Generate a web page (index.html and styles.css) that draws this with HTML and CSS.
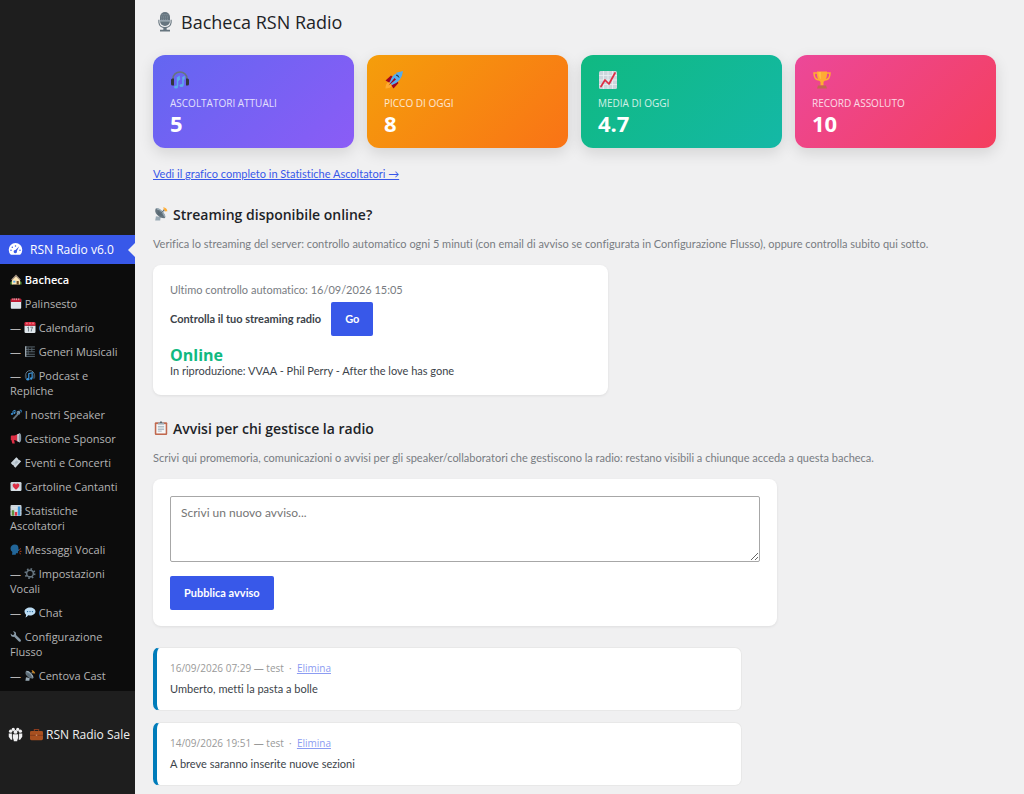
FILE: index.html
```html
<!DOCTYPE html>
<html lang="it">
<head>
    <meta charset="UTF-8">
    <meta name="viewport" content="width=device-width, initial-scale=1.0">
    <title>Bacheca RSN Radio</title>
    <link rel="stylesheet" href="styles.css">
</head>
<body>
    <!-- Icon set -->
    <svg class="icon-defs" aria-hidden="true">
        <symbol id="i-dash" viewBox="0 0 20 20"><path fill="#fff" fill-rule="evenodd" d="M3.8 17A9 9 0 1 1 16.2 17zM10 4.2a1 1 0 1 0 0 2 1 1 0 0 0 0-2zM5.700 6a1 1 0 1 0 0 2 1 1 0 0 0 0-2zM4 10a1 1 0 1 0 0 2 1 1 0 0 0 0-2zM16 10a1 1 0 1 0 0 2 1 1 0 0 0 0-2zM15 5.600l-5 5a2.200 2.200 0 1 0 1.800 1.500z"/></symbol>
        <symbol id="i-groups" viewBox="0 0 20 20"><g fill="#f0f0f1"><circle cx="3.500" cy="5.500" r="2.200"/><circle cx="16.500" cy="5.500" r="2.200"/><circle cx="7" cy="3.200" r="2.200"/><circle cx="13" cy="3.200" r="2.200"/><circle cx="10" cy="6.500" r="2.600"/><path d="M1 8.500h4.200l.6 8.500H3.800L1 13zM14.800 8.500H19V13l-2.800 4h-2z"/><path d="M6.300 9.700h7.400v5L12.200 19H7.800l-1.500-4.300z"/></g><path fill="none" stroke="#1e1e1e" stroke-width=".6" d="M5.800 8.500v5l1.500 5M14.200 8.500v5l-1.500 5"/></symbol>
        <symbol id="i-case" viewBox="0 0 36 36"><path fill="none" stroke="#8a3b1e" stroke-width="3" d="M12 10V4h12v6"/><rect y="8" width="36" height="26" rx="4" fill="#a85020"/><path fill="#7b3518" d="M0 19h36v2H0z"/><path fill="#c98a66" d="M16 18h4v4h-4z"/></symbol>
        <symbol id="i-house" viewBox="0 0 36 36"><path fill="#5c913b" d="M0 27q4-6 8 0v7H0zM28 27q5-7 8 0v7h-8z"/><path fill="#ffe8b6" d="M5 17 18 5l13 12v17H5z"/><path fill="#a08f7f" d="m2 19 16-17 16 17-3 2L18 8 5 21z"/><path fill="#66471f" d="M20 23h7v11h-7z"/><path fill="#55acee" d="M9 22h7v6H9z"/></symbol>
        <symbol id="i-pad" viewBox="0 0 36 36"><rect x="1" y="3" width="34" height="32" rx="3" fill="#e1e8ed"/><path fill="#be1931" d="M1 5q0-3 3-3h28q3 0 3 3v8H1z"/><path stroke="#fff" stroke-width="2" d="M8 1v6M14 1v6M20 1v6M27 1v6"/><path stroke="#cfd7dc" stroke-width="1" d="M5 20h26M5 25h26M5 30h26"/></symbol>
        <symbol id="i-cal" viewBox="0 0 36 36"><path fill="#e0e7ec" d="M0 12h36v20q0 4-4 4H4q-4 0-4-4z"/><path fill="#dd2e44" d="M0 12V4q0-4 4-4h28q4 0 4 4v8z"/><path stroke="#f9b4bb" stroke-width="3" d="M8 2v5M18 2v5M28 2v5"/><path fill="none" stroke="#66757f" stroke-width="3" d="m9 19 4-3v15M19 17h8q-5 7-5 14"/></symbol>
        <symbol id="i-score" viewBox="0 0 36 36"><path stroke="#6f7f8b" stroke-width="2.500" d="M4 3h30M4 11h30M4 19h30M4 27h30M4 34h30"/><path stroke="#a9b6bf" stroke-width="4" d="M4 1v34"/><path stroke="#55626b" stroke-width="3" d="M12 5v24M24 5v14"/></symbol>
        <symbol id="i-phones" viewBox="0 0 36 36"><path fill="none" stroke="#66757f" stroke-width="3" d="M4 20V15a14 13 0 0 1 28 0v5"/><path fill="#31373d" d="M0 18q0-3 3-3h3v14H3q-3 0-3-3zM30 15h3q3 0 3 3v8q0 3-3 3h-3z"/><path fill="none" stroke="#5dadec" stroke-width="3" d="M13 31V14l3-2v5l2-2M24 28V13l2-1v5"/><ellipse cx="10" cy="32" rx="4" ry="3" fill="#5dadec"/><ellipse cx="21" cy="29" rx="4" ry="3" fill="#5dadec"/></symbol>
        <symbol id="i-podcast" viewBox="0 0 36 36"><path fill="none" stroke="#6b8394" stroke-width="3" d="M4 26V16a14 14 0 0 1 28 0v10"/><path fill="#3b4c59" d="M1 17h6v13q-6-1-6-6zM29 17h6v7q0 5-6 6z"/><path fill="none" stroke="#3b94d9" stroke-width="4" d="M14 29V12l11-3v17"/><ellipse cx="11" cy="30" rx="5" ry="4" fill="#3b94d9"/><ellipse cx="22" cy="28" rx="4" ry="4" fill="#3b94d9"/></symbol>
        <symbol id="i-speaker" viewBox="0 0 36 36"><path stroke="#66757f" stroke-width="6" d="m9 33 16-17"/><circle cx="26" cy="12" r="6" fill="#8899a6"/><path stroke="#226699" stroke-width="2" d="m20 8 11 10"/><path fill="none" stroke="#3b94d9" stroke-width="3" d="M8 15V7l7-3v8"/><ellipse cx="5" cy="16" rx="4" ry="3" fill="#3b94d9"/><ellipse cx="13" cy="13" rx="3" ry="3" fill="#3b94d9"/><path stroke="#3b94d9" stroke-width="3" d="M30 4h5v7"/></symbol>
        <symbol id="i-horn" viewBox="0 0 36 36"><path fill="#dd2e44" d="M1 11q0-3 3-3h11v15h-3l2 11H6L3 23H1z"/><path fill="#dd2e44" d="m14 8 11-5v25l-11-5z"/><path fill="#ccd6dd" d="m22 4 9-3v30l-9-4z"/><ellipse cx="31" cy="15.500" rx="4" ry="14" fill="#8899a6"/></symbol>
        <symbol id="i-ticket" viewBox="0 0 36 36"><path fill="#ccd6dd" d="M1 20 19 1l5 4q0 4 4 4l7 5-19 21-5-5q0-4-4-4z"/><path fill="#aab8c2" d="m13 18 7-7 6 5-8 8z"/><path stroke="#8899a6" stroke-width="1" d="m7 17 12 11"/></symbol>
        <symbol id="i-love" viewBox="0 0 36 36"><rect y="3" width="36" height="30" rx="4" fill="#ccd6dd"/><path fill="#e1e8ed" d="m1 31 12-12h10l12 12z"/><path fill="#dd2e44" d="M18 29Q7 20 7 15a5.500 5.500 0 0 1 11-2 5.500 5.500 0 0 1 11 2q0 5-11 14z"/></symbol>
        <symbol id="i-bars" viewBox="0 0 36 36"><rect width="36" height="36" rx="3" fill="#ccd6dd"/><path stroke="#fff" d="M0 9h36M0 18h36M0 27h36"/><path fill="#5c913b" d="M4 17h8v18H4z"/><path fill="#dd2e44" d="M14 23h8v12h-8z"/><path fill="#3b94d9" d="M24 5h8v30h-8z"/></symbol>
        <symbol id="i-talk" viewBox="0 0 36 36"><path fill="#226699" d="M14 2q13 0 12 14l3 6-4 1-1 7h-6l-1 5H5l1-9Q0 22 0 15 1 3 14 2z"/><path fill="none" stroke="#c1451e" stroke-width="3" d="m29 18 5-3M30 24h6M29 29l5 4"/></symbol>
        <symbol id="i-gear" viewBox="0 0 36 36"><circle cx="18" cy="18" r="11" fill="none" stroke="#66757f" stroke-width="5"/><circle cx="18" cy="18" r="15" fill="none" stroke="#66757f" stroke-width="6" stroke-dasharray="5 6.780"/></symbol>
        <symbol id="i-chat" viewBox="0 0 36 36"><path fill="#bdddf4" d="M18 2c10 0 18 6 18 13s-8 13-18 13l-6-.8Q8 33 3 34q3-5 2-9-5-4-5-10C0 8 8 2 18 2z"/><g fill="#226699"><circle cx="10" cy="15" r="2.300"/><circle cx="18" cy="15" r="2.300"/><circle cx="26" cy="15" r="2.300"/></g></symbol>
        <symbol id="i-wrench" viewBox="0 0 36 36"><path fill="#8899a6" d="m8 1 5 6-2 5-5 1-5-5q-2 10 8 12l3-1 14 14q3 4 7 1 3-3-1-7L18 13q2-12-10-12z"/></symbol>
        <symbol id="i-dish" viewBox="0 0 36 36"><path fill="#99aab5" d="m5 24 12 2-1 9H3z"/><path fill="#66757f" d="M5 3q-5 8 3 17t19 9q5-4-3-15T5 3z"/><path fill="#99aab5" d="M5 3q7-2 16 7t8 17z"/><path fill="#55656f" d="M10 8q8-1 15 15L9 20z" opacity=".7"/><path stroke="#55656f" stroke-width="2" d="m16 17 9-8"/><circle cx="25" cy="9" r="2.500" fill="#66757f"/><path fill="none" stroke="#ffac33" stroke-width="3" d="M24 2q8 1 9 9M25 6q4 0 5 5"/></symbol>
        <symbol id="i-mic" viewBox="0 0 36 36"><path fill="none" stroke="#66757f" stroke-width="2" d="M7 14v5q1 9 11 9t11-9v-5"/><path fill="#66757f" d="M15 27h6v5h6v3H9v-3h6z"/><rect x="9" y="0" width="18" height="25" rx="9" fill="#66757f"/><path stroke="#8f9ea8" stroke-width="1.500" stroke-dasharray="2 1.500" d="M12 5h12M11 9h14M11 13h14"/><path stroke="#b3bfc7" stroke-width="2" d="M9 16h18"/></symbol>
        <symbol id="i-rocket" viewBox="0 0 36 36"><path fill="#ffac33" d="M1 35q0-10 6-13l7 7q-3 6-13 6z"/><path fill="#a0041e" d="M1 19 12 9l7 5L8 23zM17 35l10-11-5-6-9 11z"/><path fill="#55acee" d="M9 23Q15 3 36 0q-2 21-22 28z"/><path fill="#a0041e" d="M7 29 19 14l3 3z"/><path fill="#292f33" d="M22 8q5-1 6 5-2-3-6-5z" stroke="#292f33"/></symbol>
        <symbol id="i-chart" viewBox="0 0 36 36"><rect width="36" height="36" rx="3" fill="#ccd6dd"/><path stroke="#eef2f4" stroke-width="1.500" d="M0 9h36M0 18h36M0 27h36M9 0v36M18 0v36M27 0v36"/><path fill="none" stroke="#dd2e44" stroke-width="3.500" stroke-linecap="round" stroke-linejoin="round" d="m4 31 8-13 8 8L32 4"/></symbol>
        <symbol id="i-cup" viewBox="0 0 36 36"><path fill="none" stroke="#ffac33" stroke-width="3" d="M9 4H2q0 14 11 14M27 4h7q0 14-11 14"/><path fill="#ffac33" d="M8 1h20q1 16-7 21v7h-6v-7Q7 17 8 1z"/><path fill="#ffcc4d" d="M11 2h5v15q-5-4-5-15z" opacity=".6"/><path fill="#c1694f" d="M10 29h16l2 6H8z"/></symbol>
        <symbol id="i-clip" viewBox="0 0 36 36"><rect x="2" y="3" width="32" height="33" rx="3" fill="#c1694f"/><path fill="#f5f8fa" d="M6 8h24v24H6z"/><path fill="#99aab5" d="M10 4h5q3-7 6 0h5v5H10z"/><circle cx="18" cy="3" r="2" fill="#31373d"/><path stroke="#99aab5" stroke-width="2" d="M10 14h16M10 18h16M10 22h16M10 26h10"/></symbol>
    </svg>

    <div class="layout">
        <nav class="sidebar">
            <a href="#" class="menu-top current"><svg class="menu-icon"><use href="#i-dash"/></svg>RSN Radio v6.0</a>
            <ul class="submenu">
                <li><a href="#" class="active"><svg class="emoji"><use href="#i-house"/></svg> Bacheca</a></li>
                <li><a href="#"><svg class="emoji"><use href="#i-pad"/></svg> Palinsesto</a></li>
                <li><a href="#">— <svg class="emoji"><use href="#i-cal"/></svg> Calendario</a></li>
                <li><a href="#">— <svg class="emoji"><use href="#i-score"/></svg> Generi Musicali</a></li>
                <li><a href="#">— <svg class="emoji"><use href="#i-podcast"/></svg> Podcast e Repliche</a></li>
                <li><a href="#"><svg class="emoji"><use href="#i-speaker"/></svg> I nostri Speaker</a></li>
                <li><a href="#"><svg class="emoji"><use href="#i-horn"/></svg> Gestione Sponsor</a></li>
                <li><a href="#"><svg class="emoji"><use href="#i-ticket"/></svg> Eventi e Concerti</a></li>
                <li><a href="#"><svg class="emoji"><use href="#i-love"/></svg> Cartoline Cantanti</a></li>
                <li><a href="#"><svg class="emoji"><use href="#i-bars"/></svg> Statistiche Ascoltatori</a></li>
                <li><a href="#"><svg class="emoji"><use href="#i-talk"/></svg> Messaggi Vocali</a></li>
                <li><a href="#">— <svg class="emoji"><use href="#i-gear"/></svg> Impostazioni Vocali</a></li>
                <li><a href="#">— <svg class="emoji"><use href="#i-chat"/></svg> Chat</a></li>
                <li><a href="#"><svg class="emoji"><use href="#i-wrench"/></svg> Configurazione Flusso</a></li>
                <li><a href="#">— <svg class="emoji"><use href="#i-dish"/></svg> Centova Cast</a></li>
            </ul>
            <a href="#" class="menu-top"><svg class="menu-icon"><use href="#i-groups"/></svg><svg class="emoji case"><use href="#i-case"/></svg>RSN Radio Sale</a>
        </nav>

        <main class="content">
            <h1><svg class="emoji"><use href="#i-mic"/></svg>Bacheca RSN Radio</h1>

            <div class="stats">
                <div class="stat purple">
                    <svg class="emoji"><use href="#i-phones"/></svg>
                    <div class="stat-label">Ascoltatori attuali</div>
                    <div class="stat-value">5</div>
                </div>
                <div class="stat orange">
                    <svg class="emoji"><use href="#i-rocket"/></svg>
                    <div class="stat-label">Picco di oggi</div>
                    <div class="stat-value">8</div>
                </div>
                <div class="stat green">
                    <svg class="emoji"><use href="#i-chart"/></svg>
                    <div class="stat-label">Media di oggi</div>
                    <div class="stat-value">4.7</div>
                </div>
                <div class="stat pink">
                    <svg class="emoji"><use href="#i-cup"/></svg>
                    <div class="stat-label">Record assoluto</div>
                    <div class="stat-value">10</div>
                </div>
            </div>

            <p class="stats-link"><a href="#">Vedi il grafico completo in Statistiche Ascoltatori →</a></p>

            <h2><svg class="emoji"><use href="#i-dish"/></svg>Streaming disponibile online?</h2>
            <p class="description">Verifica lo streaming del server: controllo automatico ogni 5 minuti (con email di avviso se configurata in Configurazione Flusso), oppure controlla subito qui sotto.</p>
            <div class="box stream-box">
                <p class="last-check">Ultimo controllo automatico: 16/09/2026 15:05</p>
                <div class="check-row">
                    <label for="check-stream">Controlla il tuo streaming radio</label>
                    <button type="button" id="check-stream">Go</button>
                </div>
                <div class="status">Online</div>
                <div class="now-playing">In riproduzione: VVAA - Phil Perry - After the love has gone</div>
            </div>

            <h2><svg class="emoji"><use href="#i-clip"/></svg>Avvisi per chi gestisce la radio</h2>
            <p class="description">Scrivi qui promemoria, comunicazioni o avvisi per gli speaker/collaboratori che gestiscono la radio: restano visibili a chiunque acceda a questa bacheca.</p>
            <form class="box notice-form">
                <textarea aria-label="Nuovo avviso" placeholder="Scrivi un nuovo avviso..."></textarea>
                <button type="button">Pubblica avviso</button>
            </form>

            <div class="notices">
                <div class="notice">
                    <div class="notice-meta">16/09/2026 07:29 — test &nbsp;·&nbsp; <a href="#">Elimina</a></div>
                    <div class="notice-text">Umberto, metti la pasta a bolle</div>
                </div>
                <div class="notice">
                    <div class="notice-meta">14/09/2026 19:51 — test &nbsp;·&nbsp; <a href="#">Elimina</a></div>
                    <div class="notice-text">A breve saranno inserite nuove sezioni</div>
                </div>
            </div>
        </main>
    </div>
</body>
</html>
```
FILE: styles.css
```css
* {
    box-sizing: border-box;
}
body {
    margin: 0;
    background-color: #f0f0f1;
    color: #3c434a;
    font-family: Lato, "Open Sans", sans-serif;
    font-size: 11px;
    line-height: 16px;
    font-variant-ligatures: none;
}
h1, h2, p, ul {
    margin: 0;
    padding: 0;
}
h1, h2, .sidebar, .stat, .status, .notice-meta {
    font-family: "Open Sans", "Noto Sans", sans-serif;
}
a {
    color: #3858e9;
}
.icon-defs {
    position: absolute;
    width: 0;
    height: 0;
}
.emoji {
    width: 12px;
    height: 11px;
    vertical-align: -1px;
}
.layout {
    display: flex;
    min-height: 100vh;
}

/* Sidebar */
.sidebar {
    flex: 0 0 135px;
    padding-top: 235px;
    background-color: #1e1e1e;
}
.menu-top {
    display: flex;
    align-items: center;
    height: 29px;
    padding-left: 8px;
    margin-top: 29px;
    color: #f0f0f1;
    font-size: 12px;
    text-decoration: none;
    white-space: nowrap;
}
.menu-top.current {
    position: relative;
    margin-top: 0;
    background-color: #3858e9;
    color: #fff;
}
.menu-top.current::after {
    content: "";
    position: absolute;
    right: 0;
    border: 7px solid transparent;
    border-left-width: 0;
    border-right-color: #f0f0f1;
}
.menu-icon {
    width: 15px;
    height: 15px;
    margin-right: 7px;
}
.emoji.case {
    width: 13px;
    height: 13px;
    margin-right: 3px;
}
.submenu {
    padding: 4px 0 3px;
    background-color: #0c0c0c;
    list-style: none;
}
.submenu a {
    display: block;
    padding: 4px 10px 5px;
    color: #b4b4b4;
    line-height: 15px;
    text-decoration: none;
}
.submenu a.active {
    color: #fff;
    font-weight: 600;
}

/* Content */
.content {
    flex: 1;
    min-width: 0;
    padding: 8px 28px 8px 18px;
}
h1 {
    color: #1d2327;
    font-size: 18px;
    font-weight: 400;
    line-height: 28px;
}
h1 .emoji {
    width: 20px;
    height: 20px;
    margin: 0 6px 0 2px;
    vertical-align: -3px;
}
.stats {
    display: grid;
    grid-template-columns: repeat(4, 1fr);
    gap: 13px;
    margin: 19px 0 18px;
}
.stat {
    padding: 16px 17px 12px;
    border-radius: 12px;
    box-shadow: 0 5px 15px rgba(0, 0, 0, 0.12);
    color: #fff;
}
.stat .emoji {
    display: block;
    width: 20px;
    height: 18px;
}
.stat-label {
    margin-top: 6px;
    font-size: 10px;
    text-transform: uppercase;
    opacity: 0.8;
}
.stat-value {
    font-size: 22px;
    font-weight: 700;
    line-height: 25px;
}
.purple {
    background: linear-gradient(135deg, #6366f1, #8b5cf6);
}
.orange {
    background: linear-gradient(135deg, #f59e0b, #f97316);
}
.green {
    background: linear-gradient(135deg, #10b981, #14b8a6);
}
.pink {
    background: linear-gradient(135deg, #ec4899, #f43f5e);
}
h2 {
    margin: 23px 0 11px;
    color: #1d2327;
    font-size: 14px;
    font-weight: 600;
    line-height: 20px;
}
h2 .emoji {
    width: 14px;
    height: 14px;
    margin: 0 5px 0 1px;
}
.description {
    margin-bottom: 13px;
    color: #787c82;
}
.box {
    padding: 17px 17px 16px;
    border-radius: 8px;
    background-color: #fff;
    box-shadow: 0 1px 3px rgba(0, 0, 0, 0.08);
}
.stream-box {
    max-width: 455px;
}
.stream-box + h2 {
    margin-top: 24px;
}
.last-check {
    margin-bottom: 4px;
    color: #787c82;
}
.check-row {
    display: flex;
    align-items: center;
    gap: 10px;
    margin-bottom: 12px;
    font-weight: 700;
}
button {
    height: 34px;
    padding: 0 14px;
    border: none;
    border-radius: 2px;
    background-color: #3858e9;
    color: #fff;
    font: inherit;
    font-weight: 700;
    cursor: pointer;
}
.status {
    color: #10b981;
    font-size: 16px;
    font-weight: 700;
    line-height: 15px;
}
.notice-form {
    max-width: 624px;
}
textarea {
    display: block;
    width: 100%;
    height: 66px;
    margin-bottom: 14px;
    padding: 8px 10px;
    border: 1px solid #a7a7a7;
    border-radius: 2px;
    font: inherit;
    font-size: 12px;
    resize: vertical;
}
textarea::placeholder {
    color: #757575;
}
.notices {
    display: grid;
    gap: 11px;
    max-width: 589px;
    margin-top: 21px;
}
.notice {
    padding: 12px 13px 13px;
    border: 1px solid #e8e8e8;
    border-left: 4px solid #007cba;
    border-radius: 7px;
    background-color: #fff;
}
.notice-meta {
    margin-bottom: 5px;
    color: #999;
    font-size: 10px;
}
.notice-meta a {
    color: #8c9cf2;
}
```
